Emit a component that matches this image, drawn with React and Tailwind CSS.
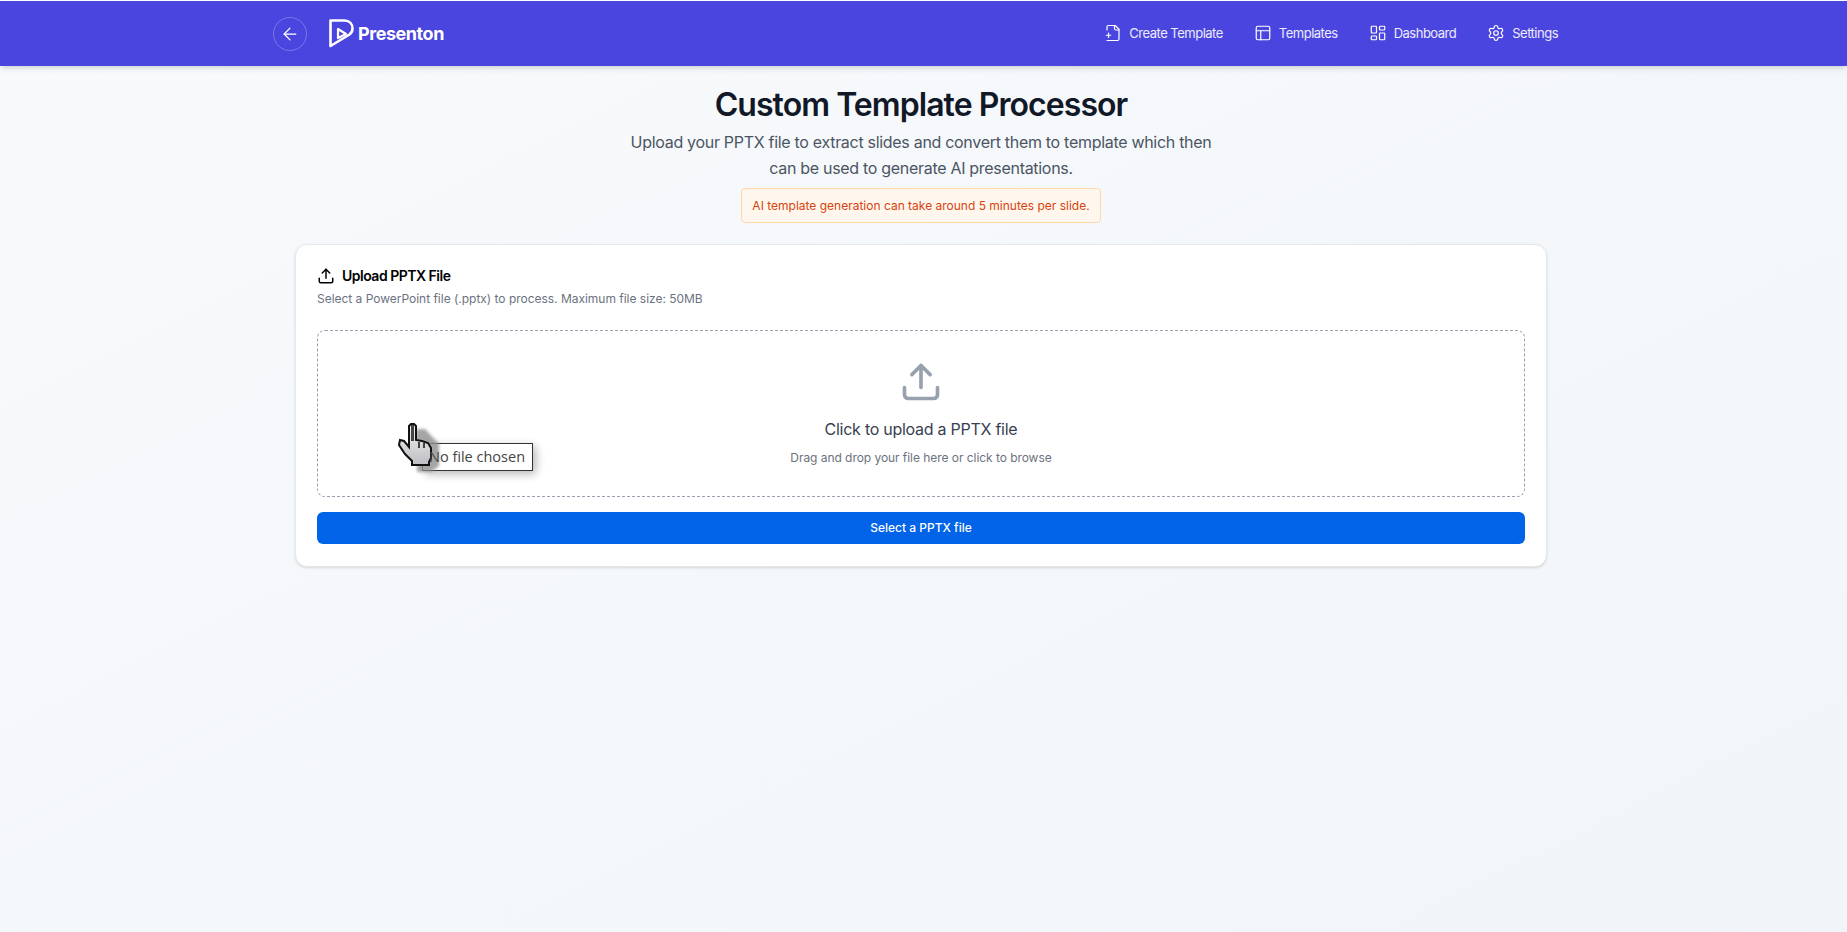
import { ArrowLeft, LayoutDashboard, PanelsTopLeft, Settings, Upload } from "lucide-react";

const FilePlusIcon = ({ className, strokeWidth }) => (
  <svg className={className} viewBox="0 0 24 24" fill="none" stroke="currentColor" strokeWidth={strokeWidth} strokeLinecap="round" strokeLinejoin="round">
    <path d="M4 22h14a2 2 0 0 0 2-2V7l-5-5H6a2 2 0 0 0-2 2v4" />
    <path d="M14 2v4a2 2 0 0 0 2 2h4" />
    <path d="M3 15h6" />
    <path d="M6 12v6" />
  </svg>
);

const NavItem = ({ icon: Icon, label }) => (
  <a className="flex items-center gap-[7px] text-[13px] leading-5 tracking-[-0.5px] text-white/90">
    <Icon className="w-[18px] h-[18px] text-white" strokeWidth={1.6} />
    <span>{label}</span>
  </a>
);

const Logo = () => (
  <svg className="w-[25px] h-[29px]" viewBox="0 0 25 29" fill="none" stroke="white" strokeWidth="2.6" strokeLinejoin="round">
    <path d="M1.5 1.5H15.5C20.5 1.5 23.5 5 23.5 9.5C23.5 12 22.4 14 20.5 15.5L1.5 27Z" />
    <path d="M9 10L17 15L9 19Z" strokeWidth="2.2" />
  </svg>
);

const HandCursor = () => (
  <svg className="absolute left-[77px] top-[89px] w-[50px] h-[55px]" viewBox="0 0 50 55">
    <defs>
      <linearGradient id="palm" x1="0" y1="0" x2="0" y2="1">
        <stop offset="0" stopColor="#f4f4f4" />
        <stop offset="1" stopColor="#bdbdc2" />
      </linearGradient>
    </defs>
    <path className="blur-[1.5px]" d="M22 9H30L44 24V46L36 52H22V44L18 30Z" fill="#8f8f8f" opacity="0.8" />
    <path
      d="M14 6L16 4H19L21 6V20L27 21L33 23L36 28V38L34 42V45H17V41L14 38L10 34L4 25L5 20L9 21L14 27Z"
      fill="url(#palm)"
      stroke="#111"
      strokeWidth="2"
      strokeLinejoin="miter"
    />
    <path d="M16 5H19V21H16Z" fill="#444" />
    <path d="M24 22V28M29 23V28" stroke="#111" strokeWidth="1.5" />
  </svg>
);

export default function App() {
  return (
    <div className="min-h-screen bg-linear-to-br from-slate-50 to-slate-100 font-['Inter',sans-serif]">
      <header className="h-[65px] mt-px bg-[#4b45e0] shadow-md pl-[273px] pr-[289px] flex items-center justify-between">
        <div className="flex items-center gap-[22px]">
          <button className="w-[34px] h-[34px] rounded-full border border-white/25 flex items-center justify-center">
            <ArrowLeft className="w-5 h-5 text-white" strokeWidth={1.5} />
          </button>
          <div className="flex items-center gap-1">
            <Logo />
            <span className="text-[18px] font-bold tracking-tight text-white">Presenton</span>
          </div>
        </div>
        <nav className="flex items-center gap-[31px] pb-[2px]">
          <NavItem icon={FilePlusIcon} label="Create Template" />
          <NavItem icon={PanelsTopLeft} label="Templates" />
          <NavItem icon={LayoutDashboard} label="Dashboard" />
          <NavItem icon={Settings} label="Settings" />
        </nav>
      </header>

      <main className="w-[1842px] flex flex-col items-center">
        <h1 className="mt-[19px] text-[32px] leading-10 font-semibold tracking-[-0.94px] text-[#111827]">Custom Template Processor</h1>
        <p className="mt-1 w-[600px] text-center text-base leading-[26px] tracking-[-0.3px] text-[#4b5563]">
          Upload your PPTX file to extract slides and convert them to template which then can be used to generate AI presentations.
        </p>
        <div className="mt-[7px] px-[10px] h-[35px] flex items-center rounded border border-orange-200 bg-orange-50 text-xs text-[#d9430d]">
          AI template generation can take around 5 minutes per slide.
        </div>

        <section className="mt-[21px] w-[1252px] rounded-xl border border-gray-200 bg-white shadow-sm px-[21px] pt-[21px] pb-[22px]">
          <h2 className="flex items-center gap-[7px] text-sm leading-5 font-semibold tracking-[-0.5px] text-black">
            <Upload className="w-[18px] h-[18px]" strokeWidth={2} />
            Upload PPTX File
          </h2>
          <p className="mt-[3px] text-xs leading-5 tracking-[-0.02px] text-[#6b7280]">
            Select a PowerPoint file (.pptx) to process. Maximum file size: 50MB
          </p>

          <div className="relative mt-[21px] h-[167px] rounded-lg border border-dashed border-gray-400 flex flex-col items-center pt-[29px]">
            <Upload className="w-11 h-11 text-gray-400" strokeWidth={2} />
            <p className="mt-[13px] text-base leading-6 tracking-[-0.26px] text-[#374151]">Click to upload a PPTX file</p>
            <p className="mt-[9px] text-xs leading-4 tracking-[-0.05px] text-[#6b7280]">Drag and drop your file here or click to browse</p>
            <div className="absolute left-[104px] top-[112px] w-[111px] h-[28px] pl-[6px] flex items-center border border-[#333] bg-white shadow-[3px_3px_10px_rgba(0,0,0,0.28)] font-['Open_Sans',sans-serif] text-[14.5px] text-[#444]">
              <span className="relative z-10">No file chosen</span>
            </div>
            <HandCursor />
          </div>

          <button className="mt-[15px] w-full h-[32px] rounded-md bg-[#0063e8] text-xs font-medium text-white">
            Select a PPTX file
          </button>
        </section>
      </main>
    </div>
  );
}
